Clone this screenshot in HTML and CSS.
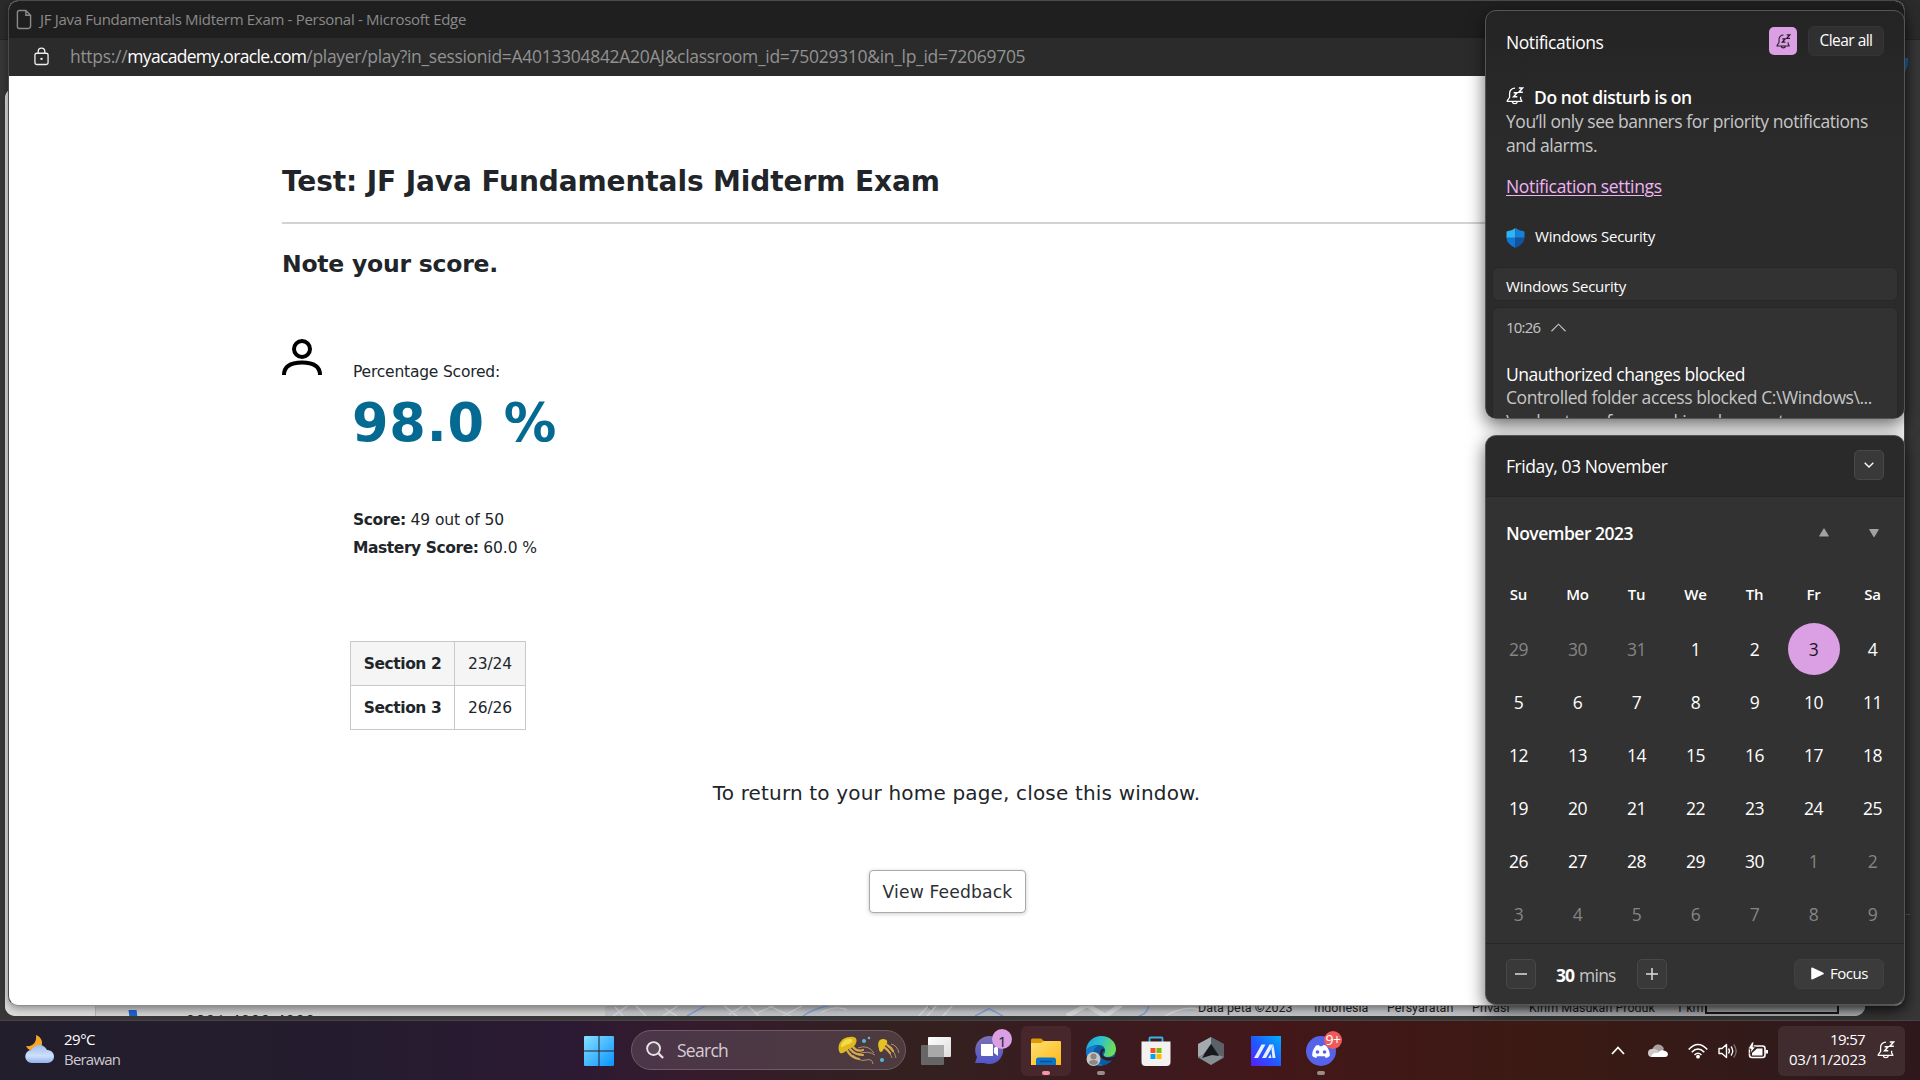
FILE: index.html
```html
<!DOCTYPE html>
<html lang="en">
<head>
<meta charset="utf-8">
<title>Desktop</title>
<link rel="stylesheet" href="styles.css">
</head>
<body>
<svg class="defs" aria-hidden="true">
  <symbol id="bell" viewBox="0 0 18 18">
    <path d="M9 1.200C5.600 1.200 3.600 3.500 3.600 6.400v4L1.300 13.600v.8h14.400v-.8l-1.100-1.600v-2.200M6.300 15c.6 2.200 4.400 2.200 5 0" fill="none" stroke="currentColor" stroke-width="1.300"/>
    <path d="M7.600 5.700h3.500l-3.500 4h3.700M12.800 1h3.800l-3.800 4.300h4" fill="none" stroke="currentColor" stroke-width="1.500"/>
  </symbol>
</svg>
<div class="desktop">
  <div class="back-window">
    <div class="back-title"></div>
    <div class="back-page">
      <div class="back-side"></div>
      <div class="back-list"><i class="blue-mark"></i><span>0821 4200 4200</span></div>
      <div class="map">
        <svg class="roads" viewBox="0 0 1260 12" preserveAspectRatio="none">
          <g fill="none" stroke="#d6d7d9" stroke-width="1.5">
            <path d="M8 12 24 0M10 2 18 12M30 0 41 12M58 12 74 0M60 4 72 12M118 0l14 12M124 10 140 0M142 0l12 12M150 10 170 0M162 0l24 12M178 12 197 1M216 8q14-8 26-3M314 12l10-12M322 12l10-12M338 12l10-12"/>
            <path d="M462 12 482 0M482 0 500 12 516 0" stroke-width="5"/><path d="M560 12q20-12 34-7"/>
          </g>
          <g fill="none" stroke="#7d9bd6" stroke-width="1.5"><path d="M82 12Q90 7 102 0M198 12Q208 4 226 0M370 12 384 4 398 12M534 12q8-2 10-12"/></g>
          <path d="m322 0 5 5" stroke="#5f9e78"/>
        </svg>
        <div class="map-labels"><span>Data peta ©2023</span><span>Indonesia</span><span>Persyaratan</span><span>Privasi</span><span>Kirim Masukan Produk</span><span>1 km</span><i></i></div>
      </div>
    </div>
    <svg class="peek" viewBox="0 0 4 16"><path d="M0 0h4c0 7-1 11-4 15z" fill="#1f6fc4"/></svg>
    <i class="tick"></i>
  </div>

  <main class="window">
    <header class="titlebar">
      <svg viewBox="0 0 17 22"><path d="M3 1.5h7.5l5 5V18a2.5 2.5 0 0 1-2.5 2.5H3.500A2 2 0 0 1 1.500 18V3.500A2 2 0 0 1 3.500 1.500M10.500 1.500v5h5" fill="none" stroke="#8b8b8b" stroke-width="1.500"/></svg>
      <span>JF Java Fundamentals Midterm Exam - Personal - Microsoft Edge</span>
    </header>
    <div class="urlbar">
      <svg viewBox="0 0 16 20"><rect x="1" y="6.500" width="14" height="12" rx="2" fill="none" stroke="#eee" stroke-width="1.400"/><path d="M4.500 6.500V4.500a3.500 3.500 0 0 1 7 0v2" fill="none" stroke="#eee" stroke-width="1.400"/><circle cx="8" cy="12.500" r="1.300" fill="#eee"/></svg>
      <span class="scheme">https://</span><span class="host">myacademy.oracle.com</span><span class="path">/player/play?in_sessionid=A4013304842A20AJ&amp;classroom_id=75029310&amp;in_lp_id=72069705</span>
    </div>
    <section class="exam">
      <h1>Test: JF Java Fundamentals Midterm Exam</h1>
      <h2>Note your score.</h2>
      <div class="result">
        <svg class="person" viewBox="0 0 40 36"><circle cx="20" cy="10" r="8" fill="none" stroke="#000" stroke-width="4"/><path d="M2 36C2 27 9 23.500 20 23.500S38 27 38 36" fill="none" stroke="#000" stroke-width="4"/></svg>
        <div>
          <p class="label">Percentage Scored:</p>
          <p class="percent">98.0 %</p>
          <div class="scores">
            <p><b>Score:</b> 49 out of 50</p>
            <p><b>Mastery Score:</b> 60.0 %</p>
          </div>
          <div class="sections">
            <b class="odd">Section 2</b><span class="odd">23/24</span>
            <b>Section 3</b><span>26/26</span>
          </div>
        </div>
      </div>
      <p class="return">To return to your home page, close this window.</p>
      <button class="feedback">View Feedback</button>
    </section>
  </main>

  <aside class="panel notifications">
    <div class="n-head">
      <span>Notifications</span>
      <div class="n-actions"><i class="dnd"><svg><use href="#bell"/></svg></i><b>Clear all</b></div>
    </div>
    <div class="n-title"><svg><use href="#bell"/></svg><b>Do not disturb is on</b></div>
    <p class="n-text">You’ll only see banners for priority notifications<br>and alarms.</p>
    <a class="n-link">Notification settings</a>
    <div class="n-app">
      <svg viewBox="0 0 18 20"><path d="M9 0v10H0V3.500Q5.500 3 9 0" fill="#31b4f2"/><path d="M9 0v10h9V3.500Q12.500 3 9 0" fill="#1580d8"/><path d="M0 9.500h9V20Q0 16 0 9.500" fill="#0e78d4"/><path d="M18 9.500H9V20q9-4 9-10.500" fill="#12529f"/></svg>
      <span>Windows Security</span>
    </div>
    <div class="card first">Windows Security</div>
    <div class="card">
      <div class="n-time"><span>10:26</span><svg viewBox="0 0 16 9"><path d="m.5 8.500 7.500-7.500 7.500 7.500" fill="none" stroke="#c4c4c4" stroke-width="1.200"/></svg></div>
      <p class="n-sub">Unauthorized changes blocked</p>
      <p class="n-body">Controlled folder access blocked C:\Windows\...<br>\svchost.exe from making changes to</p>
    </div>
  </aside>

  <aside class="panel calendar">
    <div class="c-head"><span>Friday, 03 November</span><i class="sq"><svg viewBox="0 0 10 6"><path d="m.7.700 4.300 4.300 4.300-4.300" fill="none" stroke="#fff" stroke-width="1.300"/></svg></i></div>
    <div class="c-month"><b>November 2023</b>
      <svg viewBox="0 0 60 10"><path d="M5 1 9.200 8H.8zM50.800 1.500h8.400L55 8.500z" fill="#a2a2a2" stroke="#a2a2a2" stroke-width="1.200" stroke-linejoin="round"/></svg></div>
    <div class="c-days"><b>Su</b><b>Mo</b><b>Tu</b><b>We</b><b>Th</b><b>Fr</b><b>Sa</b></div>
    <div class="c-grid">
      <i>29</i><i>30</i><i>31</i><span>1</span><span>2</span><span class="today">3</span><span>4</span>
      <span>5</span><span>6</span><span>7</span><span>8</span><span>9</span><span>10</span><span>11</span>
      <span>12</span><span>13</span><span>14</span><span>15</span><span>16</span><span>17</span><span>18</span>
      <span>19</span><span>20</span><span>21</span><span>22</span><span>23</span><span>24</span><span>25</span>
      <span>26</span><span>27</span><span>28</span><span>29</span><span>30</span><i>1</i><i>2</i>
      <i>3</i><i>4</i><i>5</i><i>6</i><i>7</i><i>8</i><i>9</i>
    </div>
    <div class="c-foot">
      <i class="sq"><svg viewBox="0 0 12 12"><path d="M0 6h12" stroke="#ddd" stroke-width="1.500"/></svg></i>
      <span class="mins"><b>30</b> mins</span>
      <i class="sq"><svg viewBox="0 0 12 12"><path d="M0 6h12M6 0v12" stroke="#ddd" stroke-width="1.500"/></svg></i>
      <span class="focus"><svg viewBox="0 0 13 13"><path d="M1 1.300v10.400L12 6.500z" fill="#fff" stroke="#fff" stroke-width="1.600" stroke-linejoin="round"/></svg>Focus</span>
    </div>
  </aside>

  <footer class="taskbar">
    <div class="weather">
      <svg viewBox="0 0 30 30"><defs><linearGradient id="cl" x2="0" y2="1"><stop stop-color="#9dbdf0"/><stop offset=".6" stop-color="#cfe0fa"/><stop offset="1" stop-color="#8fb0ec"/></linearGradient></defs><path d="M11 1c6 2 8 9 4 13-4 4-11 4-14-2 7 1 11-4 10-11" fill="#f5a623"/><path d="M7 29a6.500 6.500 0 0 1-.5-13C8 12.500 11 11 14.500 11s6 2 7.500 5a6.500 6.500 0 0 1 1 13z" fill="url(#cl)"/></svg>
      <div><span>29°C</span><em>Berawan</em></div>
    </div>
    <div class="apps">
      <div class="slot"><svg viewBox="0 0 29 29"><defs><linearGradient id="w" x2="1" y2="1"><stop stop-color="#86e0ff"/><stop offset="1" stop-color="#0894ff"/></linearGradient></defs><path d="M0 1q0-1 1-1h13v14H0zM15 0h13q1 0 1 1v13H15zM0 15h14v14H1q-1 0-1-1zM15 15h14v13q0 1-1 1H15z" fill="url(#w)"/></svg></div>
      <div class="search">
        <svg class="glass" viewBox="0 0 19 19"><circle cx="8" cy="8" r="6.800" fill="#ffffff18" stroke="#e9e4e8" stroke-width="2"/><path d="m13 13 5 5" stroke="#e9e4e8" stroke-width="2.400"/></svg>
        <span>Search</span>
        <svg class="jelly" viewBox="0 0 62 30">
          <g fill="none" stroke="#c9a579" stroke-width=".8"><path d="M20 13q10-4 16 5M20 19q10-4 17 1M15 20q7 7 13 5t7 4M50 12q6 2 8 11M48 14q4 2 6 9M53 9q6 1 8 9"/></g>
          <g fill="none" stroke="#d6a84f" stroke-width="2.200" stroke-linecap="round"><path d="M9 15q3 7 12 9M12 14q5 6 13 6M15 12q4 5 10 3M46 12q4 3 6 6M49 10q4 2 6 6"/></g>
          <path d="M1 16C-1 9 4 2 12 2c7-1 8 4 5 8-2 3-6 3-9 6-2 2-6 4-7 0" fill="#dfba1c"/><path d="M3 12C3 7 8 3 13 4c3 1 1 4-2 5-3 0-5 3-8 3" fill="#f3dd45"/>
          <path d="M41 14c-2-6 0-10 4-10 5 0 5 4 3 6-2 1-2 6-5 7-1 0-2-1-2-3" fill="#e4c225"/>
          <g fill="#5bb4dc"><circle cx="26" cy="6" r="2"/><circle cx="31" cy="3" r="1.300"/><circle cx="44" cy="25" r="2"/></g></svg>
      </div>
      <div class="slot"><svg viewBox="0 0 30 28"><defs><linearGradient id="tv" x2="1" y2="1"><stop stop-color="#fff"/><stop offset="1" stop-color="#dcdcdc"/></linearGradient></defs><rect y="8" width="23" height="20" rx="1" fill="#666"/><rect x="7" width="23" height="20" rx="1" fill="url(#tv)"/><path d="M7 8h16v12H7z" fill="#a9a9a9"/></svg></div>
      <div class="slot chat"><svg viewBox="0 0 30 30"><defs><linearGradient id="ch" x2="0" y2="1"><stop stop-color="#7c6fb4"/><stop offset="1" stop-color="#5157c9"/></linearGradient></defs><path d="M15 1a14 14 0 1 1-5 27H1l2-6A14 14 0 0 1 15 1" fill="url(#ch)"/><path d="M7 9h11q1 0 1 1v11H8q-1 0-1-1zM20 13l4-3v11l-4-3z" fill="#fff"/></svg><u class="badge pink">1</u></div>
      <div class="slot active"><svg viewBox="0 0 30 30"><defs><linearGradient id="fo" x2="1" y2="1"><stop stop-color="#ffdf72"/><stop offset="1" stop-color="#fbb917"/></linearGradient></defs><path d="M0 4q0-1.500 1.500-1.500H10L13 5h0v7H0z" fill="#dd9a06"/><path d="M0 7h10l3-2h16q1 0 1 1v23H0z" fill="url(#fo)"/><path d="M5 29v-5q0-2.500 2.500-2.500h15Q25 21.500 25 24v5z" fill="#0b74c9"/><path d="M9 25.500h12" stroke="#084d8c" stroke-width="1.200"/></svg><s class="run pinkrun"></s></div>
      <div class="slot"><svg viewBox="0 0 30 30"><defs><linearGradient id="e1" x2="1" y2=".3"><stop stop-color="#1ba0dc"/><stop offset=".5" stop-color="#2cc0d0"/><stop offset="1" stop-color="#6bdc5a"/></linearGradient></defs><circle cx="15" cy="15" r="14.500" fill="#0c59a4"/><path d="M0 14C1 5 8 0 15 0c9 0 15 6 15 13 0 5-4 8-8 8-3 0-5-1-4-3 3-4 0-9-5-9C7 9 3 11 0 14" fill="url(#e1)"/><path d="M0 14c3-4 8-5 12-4-5 2-6 8-3 13 2 3 5 5 8 6.500C8 31-1 24 0 14" fill="#1679ca"/><path d="M16 17c0 4 5 6 13 3.500l1-1.500v3l-3 2c-6 2-13-1-13-6 0-3 2-6 4-5 2 1-1 2-2 4" fill="#311b20"/><circle cx="7.500" cy="23" r="7" fill="#c9c5c2"/><circle cx="7.500" cy="20.500" r="3" fill="#888"/><path d="M3 27q0-3 4.500-3t4.500 3q-4.500 4-9 0" fill="#888"/></svg><s class="run"></s></div>
      <div class="slot"><svg viewBox="0 0 30 30"><path d="M8.500 6V2.500q0-1 1-1h11q1 0 1 1V6" fill="none" stroke="#35b6e8" stroke-width="1.800"/><path d="M.5 5.500h29V26a4 4 0 0 1-4 4h-21a4 4 0 0 1-4-4z" fill="#f3f2f1"/><path d="M9.500 12h5v5h-5z" fill="#f25022"/><path d="M15.500 12h5v5h-5z" fill="#7fba00"/><path d="M9.500 18h5v5h-5z" fill="#00a4ef"/><path d="M15.500 18h5v5h-5z" fill="#ffb900"/></svg></div>
      <div class="slot"><svg viewBox="0 0 30 30"><path d="M15 1 28 8v14l-13 7-13-7V8z" fill="#43484c"/><path d="M15 1 2 8v13l5-2 8-11z" fill="#a4abb0"/><path d="m15 1 13 7v13l-5-2-8-11z" fill="#5b6267"/><path d="m2 21 5-2h16l5 2-13 8z" fill="#878e93"/><path d="m15 8 8 12-7-1-10 3z" fill="#16191b"/></svg></div>
      <div class="slot"><svg viewBox="0 0 30 30"><defs><linearGradient id="ma" x1="0" y1="1" x2="1" y2="0"><stop stop-color="#5a1cff"/><stop offset=".5" stop-color="#1f5cff"/><stop offset="1" stop-color="#00b1ff"/></linearGradient></defs><path d="M0 0h30v30H0z" fill="url(#ma)"/><path d="M3 22 10.500 8.500h4L7 22zM11 22l7.500-13.500h4L15 22zM22.500 9l2 13h-3l-1-9zM17 22l2.500-4 1 4z" fill="#e8edff"/></svg></div>
      <div class="slot"><svg viewBox="0 0 30 30"><circle cx="15" cy="15" r="15" fill="#5562ea"/><path d="M10 9.500 13 9l.7 1.300h2.600L17 9l3 .5c3 3.500 4 7 3.800 10.500-1.300 1-2.600 1.600-4 2l-1-1.700h-7.600L10.200 22c-1.400-.4-2.700-1-4-2C6 16.500 7 13 10 9.500" fill="#fff"/><circle cx="11.500" cy="16" r="1.800" fill="#5562ea"/><circle cx="18.500" cy="16" r="1.800" fill="#5562ea"/></svg><u class="badge red">9+</u><s class="run"></s></div>
    </div>
    <div class="tray">
      <svg class="t-up" viewBox="0 0 14 9"><path d="m1 8 6-6.500L13 8" fill="none" stroke="#fff" stroke-width="1.800"/></svg>
      <svg class="t-cloud" viewBox="0 0 20 14"><path d="M4 8c0-9 10-10 12-3l-8 6z" fill="#a9a09d"/><path d="M4 13a4 4 0 0 1 0-8c3-1 5 1 8 3l-2 5z" fill="#cfc9c7"/><path d="M3 13q2-5 7-4 3-4 6-2.500 4 1 4 4-.5 2.500-3 2.500z" fill="#fff"/></svg>
      <svg class="t-wifi" viewBox="0 0 20 16"><g fill="none" stroke="#fff" stroke-width="1.500"><path d="M.7 6.500Q10-3.500 19.300 6.500M3.700 9.300q6.300-6.400 12.600 0M6.500 12q3.500-3.400 7 0"/></g><circle cx="10" cy="13.700" r="1.900" fill="#fff"/></svg>
      <svg class="t-vol" viewBox="0 0 20 16"><path d="M1 5.500h3L8.500 1.500v13L4 10.500H1z" fill="none" stroke="#fff" stroke-width="1.400" stroke-linejoin="round"/><path d="M10.500 5.500q2 2.500 0 5M13 3.500q3.500 4.500 0 9" fill="none" stroke="#fff" stroke-width="1.300"/><path d="M15.700 1.500q5 6.500 0 13" fill="none" stroke="#806d68" stroke-width="1.300"/></svg>
      <svg class="t-bat" viewBox="0 0 20 16"><rect x="1.500" y="3" width="15.500" height="11.500" rx="2.500" fill="none" stroke="#fff" stroke-width="1.600"/><path d="M17.500 7h2.500v3.500h-2.500zM4 12.500V10l5-4.500h5.500v7z" fill="#fff"/><path d="M4-1 0 6h3l-1 5 5.500-7H5l1-5z" fill="#fff" stroke="#351a17" stroke-width=".8"/></svg>
      <div class="clock"><div><span>19:57</span><span>03/11/2023</span></div><svg><use href="#bell"/></svg></div>
    </div>
  </footer>
</div>
</body>
</html>
```

FILE: styles.css
```css
* { box-sizing: border-box; }
body { margin: 0; }
p, h1, h2 { margin: 0; }
i, em { font-style: normal; }
u, s { text-decoration: none; }
svg { display: block; flex: none; overflow: visible; }
.defs { position: absolute; width: 0; height: 0; }

.desktop {
  position: relative;
  width: 1920px;
  height: 1080px;
  overflow: hidden;
  background: #363636;
  color: #fff;
  font: 17.5px/24px "Open Sans", "Noto Sans", sans-serif;
  letter-spacing: -0.43px;
}

/* Window behind the exam */
.back-window { position: absolute; inset: 0 0 59px 0; background: #373737; }
.back-title { height: 40px; background: #2b2b2b; border-bottom: 1px solid #242424; }
.back-page {
  display: flex;
  width: 1860px;
  height: 928px;
  margin: 48px 0 0 5px;
  border-radius: 10px;
  overflow: hidden;
  background: #d3d3d3;
  align-items: flex-end;
}
.back-side { width: 91px; height: 100%; background: #dcdcdc; border-right: 1px solid #b5b5b5; }
.back-list { display: flex; width: 509px; height: 11px; padding-left: 33px; overflow: hidden; background: linear-gradient(#bdbdbd, #d3d3d3); }
.blue-mark { width: 8px; height: 7px; margin-top: 5px; background: #1a62cc; transform: skewX(8deg); }
.back-list span { margin: 5px 0 0 49px; color: #222; font: 16px/24px Roboto, sans-serif; letter-spacing: 1px; }
.map { position: relative; flex: 1; height: 11px; overflow: hidden; background: linear-gradient(#acaeb1, #bfc1c4 60%); }
.roads { position: absolute; left: 0; top: 0; width: 1260px; height: 11px; }
.map-labels { position: relative; display: flex; padding-left: 593px; margin-top: -5px; color: #1c1c1c; font: 12.5px/16px Roboto, sans-serif; letter-spacing: 0; white-space: nowrap; }
.map-labels span:nth-child(1) { width: 116px; }
.map-labels span:nth-child(2) { width: 73px; }
.map-labels span:nth-child(3) { width: 85px; }
.map-labels span:nth-child(4) { width: 57px; }
.map-labels span:nth-child(5) { width: 147px; }
.map-labels span:nth-child(6) { width: 29px; }
.map-labels i { width: 134px; height: 12px; margin-top: 2px; border: 2px solid #1c1c1c; border-top: 0; }
.peek { position: absolute; left: 1904px; top: 58px; width: 4px; height: 16px; }
.tick { position: absolute; left: 1904px; top: 914px; width: 6px; height: 1px; background: #5b5b5b; }

/* Exam window */
.window {
  position: absolute;
  left: 8px;
  top: 0;
  width: 1897px;
  height: 1006px;
  overflow: hidden;
  border: 1px solid #4b4b4b;
  border-bottom-color: #8e8e8e;
  border-radius: 10px;
  background: #fff;
  color: #212529;
  box-shadow: 0 2px 8px #0006;
  font-family: "DejaVu Sans", Verdana, sans-serif;
}
.titlebar { display: flex; align-items: center; height: 37px; padding-left: 7px; background: #1f1f1f; color: #8a8a8a; font: 15px/24px "Open Sans", sans-serif; letter-spacing: -0.302px; }
.titlebar svg { width: 16px; height: 21px; margin-right: 8px; }
.titlebar span { margin-top: -2px; }
.urlbar { display: flex; align-items: center; height: 38px; padding-left: 25px; background: #2b2b2b; color: #929292; font: 17.5px/24px "Open Sans", sans-serif; letter-spacing: -0.302px; }
.urlbar span { margin-top: -2px; }
.urlbar svg { width: 15px; height: 19px; margin: -2px 21px 0 0; }
.urlbar .host { color: #fff; letter-spacing: -0.682px; }

.exam { padding: 86px 273px 0; }
.exam h1 { padding-bottom: 20px; border-bottom: 2px solid #d3d3d3; font-size: 28px; line-height: 40px; letter-spacing: -0.1px; }
.exam h2 { margin-top: 24px; font-size: 23.5px; line-height: 32px; letter-spacing: -0.23px; }
.result { display: flex; margin-top: 59px; font-size: 15.5px; letter-spacing: -0.1px; }
.person { width: 40px; height: 36px; margin-right: 31px; }
.label { margin-top: 21px; letter-spacing: -0.2px; }
.percent { margin: 7px 0 51px -1px; color: #056a91; font-size: 52.5px; line-height: 64px; font-weight: 700; letter-spacing: 0.8px; }
.scores { line-height: 28px; }
.scores b, .sections b { letter-spacing: -0.43px; }
.sections {
  display: grid;
  grid-template-columns: 104px 71px;
  grid-auto-rows: 44px;
  width: max-content;
  margin: 79px 0 0 -3px;
  border: solid #c9c9c9;
  border-width: 1px 0 0 1px;
  line-height: 45px;
  text-align: center;
}
.sections > * { border: solid #c9c9c9; border-width: 0 1px 1px 0; }
.sections .odd { background: #f5f5f5; }
.return { margin-top: 48px; text-align: center; font-size: 20px; line-height: 30px; letter-spacing: 0.17px; }
.feedback {
  display: block;
  width: 157px;
  height: 43px;
  margin: 62px 0 0 587px;
  padding: 0;
  border: 1px solid #a9a9a9;
  border-radius: 4px;
  background: #fff;
  box-shadow: 0 1px 4px #0003;
  color: #2b2f33;
  font: 17.2px/40px "DejaVu Sans", sans-serif;
  letter-spacing: 0.13px;
}

/* Flyouts */
.panel {
  position: absolute;
  left: 1485px;
  width: 420px;
  overflow: hidden;
  border: 1px solid #555;
  border-radius: 11px;
  box-shadow: 0 6px 18px #0009;
}
.notifications { top: 10px; height: 409px; background: linear-gradient(#242424, #2b2b2b 35%); }
.n-head { display: flex; justify-content: space-between; height: 30px; margin-top: 15px; padding: 0 20px; }
.n-head > span { margin-top: 4px; }
.n-actions { display: flex; gap: 11px; align-items: center; }
.dnd { display: grid; place-items: center; width: 28px; height: 28px; border-radius: 5px; background: #db9fe4; color: #2a1c2d; }
.dnd svg { width: 15px; height: 15px; }
.n-actions b { width: 76px; height: 30px; border-radius: 6px; border: 1px solid #353535; background: #303030; font-weight: 400; font-size: 15.5px; line-height: 27px; letter-spacing: -0.53px; text-align: center; }
.n-title { display: flex; margin-top: 29px; padding-left: 20px; }
.n-title svg { width: 18px; height: 18px; margin: 2px 10px 0 0; }
.n-title b { font-weight: 600; }
.n-text { padding-left: 20px; color: #c6c6c6; }
.n-link { display: block; margin: 17px 0 0 20px; color: #efb3f4; text-decoration: underline; text-decoration-thickness: 1px; text-underline-offset: 2px; letter-spacing: -0.34px; }
.n-app { display: flex; align-items: center; gap: 10px; margin: 26px 0 19px 20px; font-size: 15px; letter-spacing: -0.22px; }
.n-app svg { width: 19px; height: 20px; margin-top: 3px; }
.card { height: 130px; margin: 0 6px; padding: 7px 13px; border: 1px solid #272727; border-radius: 6px; background: #323232; }
.card.first { height: 34px; margin-bottom: 6px; padding-top: 6px; font-size: 15px; letter-spacing: -0.22px; }
.n-time { display: flex; align-items: center; gap: 11px; color: #c6c6c6; font-size: 15px; letter-spacing: -0.8px; }
.n-time svg { width: 15px; height: 9px; }
.n-sub { margin-top: 23px; letter-spacing: -0.46px; }
.n-body { color: #c6c6c6; white-space: nowrap; letter-spacing: -0.42px; line-height: 23.5px; }

.calendar { top: 435px; height: 570px; background: #323232; }
.sq { display: grid; place-items: center; width: 30px; height: 30px; border: 1px solid #484848; border-radius: 5px; background: #393939; }
.sq svg { width: 12px; height: 12px; }
.c-head { display: flex; align-items: center; justify-content: space-between; height: 61px; padding: 0 20px; background: #2a2a2a; border-bottom: 1px solid #262626; }
.c-head .sq { margin-top: -2px; }
.c-head .sq svg { width: 10px; height: 6px; }
.c-month { display: flex; align-items: center; justify-content: space-between; margin-top: 24px; padding: 0 25px 0 20px; }
.c-month b { font-weight: 600; letter-spacing: -0.51px; }
.c-month svg { width: 60px; height: 10px; }
.c-days, .c-grid { display: grid; grid-template-columns: repeat(7, 59px); margin-left: 3px; text-align: center; }
.c-days { margin-top: 37px; font-size: 15px; letter-spacing: -0.15px; }
.c-days b { font-weight: 600; }
.c-grid { grid-auto-rows: 53px; align-items: center; justify-items: center; margin-top: 16px; letter-spacing: -0.6px; }
.c-grid > * { line-height: 52px; }
.c-grid i { color: #858585; }
.today { width: 52px; height: 52px; border-radius: 50%; background: #db9fe4; color: #1a1a1a; }
.c-foot { display: flex; align-items: center; height: 61px; margin-top: 3px; padding: 0 20px; border-top: 1px solid #272727; }
.mins { width: 101px; padding: 2px 0 0 20px; color: #c6c6c6; letter-spacing: -0.75px; word-spacing: 1px; white-space: nowrap; }
.mins b { color: #fff; letter-spacing: -0.9px; }
.focus { display: flex; align-items: center; gap: 6px; width: 90px; height: 30px; margin-left: auto; padding: 0 0 2px 16px; border: 1px solid #404040; border-radius: 6px; background: #3b3b3b; font-size: 15px; letter-spacing: -0.46px; }
.focus svg { width: 13px; height: 13px; }

/* Taskbar */
.taskbar {
  position: absolute;
  left: 0;
  top: 1020px;
  width: 1920px;
  height: 60px;
  display: flex;
  align-items: center;
  border-top: 1px solid #4a4246;
  background: linear-gradient(90deg, #221e2c 0, #241c2e 340px, #2b1a33 560px, #351b2c 690px, #33211f 900px, #3a1b20 1090px, #431719 1280px, #3b1a13 1560px, #301a1b 1800px, #2f181b);
}
.weather { display: flex; gap: 9px; width: 574px; margin-top: -3px; padding-left: 25px; font-size: 15px; line-height: 20px; }
.weather svg { width: 30px; height: 30px; margin-top: 5px; }
.weather span, .weather em { display: block; }
.weather span { letter-spacing: -0.5px; }
.weather em { color: #ccc8cf; letter-spacing: -0.8px; }
.apps { display: flex; align-items: center; }
.slot { position: relative; display: grid; place-items: center; width: 50px; height: 50px; margin-right: 5px; border-radius: 6px; }
.slot > svg { width: 30px; height: 30px; }
.slot:first-child { margin-right: 7px; }
.slot.active { background: #47272b; }
.chat > svg { margin: -2px 4px 0 0; }
.badge { position: absolute; display: grid; place-items: center; border-radius: 50%; }
.pink { right: 4px; top: 3px; width: 20px; height: 20px; background: #dba0e4; color: #222; font-size: 15px; }
.red { right: 4px; top: 5px; width: 18px; height: 18px; background: #ee5a59; font-size: 14px; line-height: 18px; }
.run { position: absolute; left: 21px; bottom: 1px; width: 8px; height: 4px; border-radius: 2px; background: #9b8c8c; }
.pinkrun { background: #f495a4; }
.search { display: flex; align-items: center; width: 275px; height: 40px; margin: -1px 5px 0 0; padding: 0 5px 0 14px; border: 1px solid #6d5b6a; border-radius: 20px; background: linear-gradient(90deg, #4b3549, #4d3b3e); color: #d6cdd4; letter-spacing: -0.73px; }
.glass { width: 18px; height: 18px; margin-right: 13px; }
.jelly { width: 62px; height: 30px; margin-left: auto; }
.tray { display: flex; align-items: center; margin-left: auto; padding-right: 15px; }
.t-up { width: 14px; height: 9px; margin-right: 23px; }
.t-cloud { width: 20px; height: 14px; margin-right: 20px; }
.t-wifi { width: 20px; height: 16px; margin-right: 10px; }
.t-vol { width: 20px; height: 16px; margin-right: 10px; }
.t-bat { width: 20px; height: 16px; margin-right: 10px; }
.clock { display: flex; align-items: center; width: 127px; height: 50px; padding-left: 11px; border-radius: 6px; background: #402c2e; font-size: 15px; line-height: 20px; }
.clock div { width: 76px; margin-top: -4px; text-align: right; letter-spacing: -0.26px; white-space: nowrap; }
.clock span { display: block; }
.clock span:first-child { letter-spacing: -0.65px; }
.clock svg { width: 18px; height: 18px; margin: -2px 0 0 12px; }
```
